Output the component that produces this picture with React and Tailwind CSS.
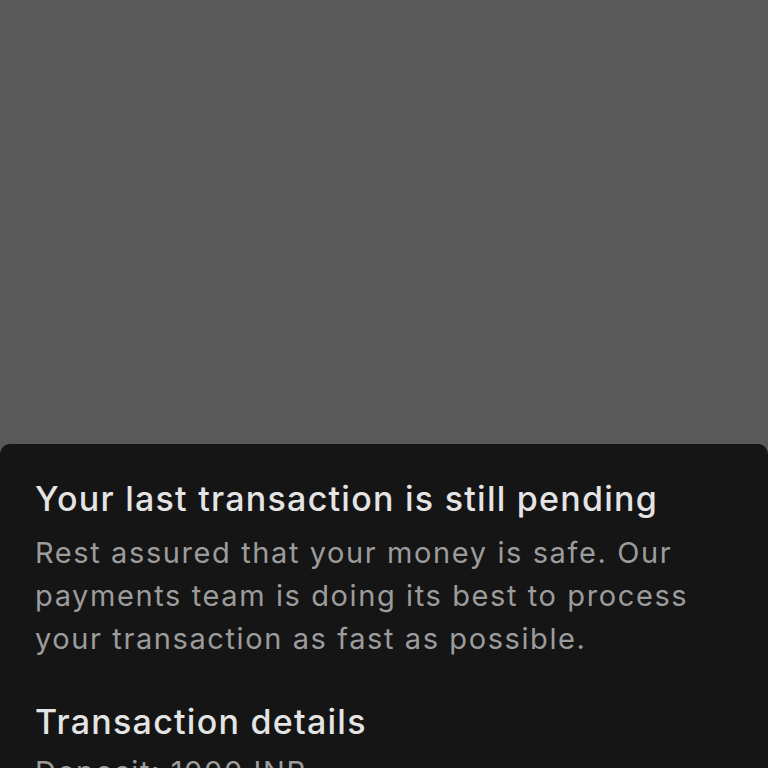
export default function App() {
  return (
    <div className="min-h-screen bg-[#595959] flex flex-col" style={{ fontFamily: "Inter, 'Noto Sans', sans-serif" }}>
      {/* dimmed backdrop */}
      <div className="h-[444px] shrink-0"></div>

      {/* bottom sheet */}
      <div className="flex-1 bg-[#151515] rounded-t-[10px] px-[35px] pt-[35px] pb-10">
        <h2 className="text-[34px] leading-[40px] font-medium text-[#e4e4e4] tracking-[1.25px] whitespace-nowrap">
          Your last transaction is still pending
        </h2>
        <p className="mt-[12px] text-[29px] leading-[43px] text-[#9c9c9c] tracking-[1.6px] pr-[10px]">
          Rest assured that your money is safe. Our payments team is doing its best to process your transaction as fast as possible.
        </p>

        <h3 className="mt-[42px] text-[34px] leading-[40px] font-medium text-[#e4e4e4] tracking-[1.25px]">
          Transaction details
        </h3>
        <p className="mt-[8px] text-[29px] leading-[43px] text-[#9c9c9c] tracking-[1.6px]">Deposit: 1000 INR</p>
      </div>
    </div>
  )
}
